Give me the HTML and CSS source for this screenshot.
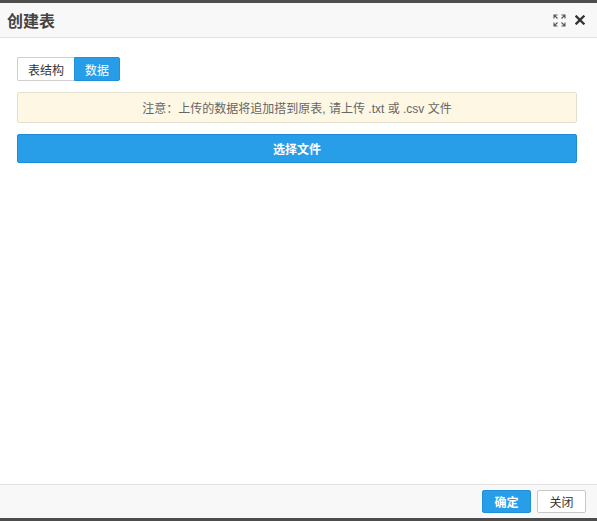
FILE: index.html
```html
<!DOCTYPE html>
<html lang="zh">
<head>
<meta charset="utf-8">
<title>创建表</title>
<link rel="stylesheet" href="styles.css">
</head>
<body>
<div class="modal">
  <div class="modal-header">
    <h3 class="modal-title">创建表</h3>
    <div class="header-tools">
      <svg class="icon-expand" width="13" height="13" viewBox="0 0 13 13" fill="none" stroke="#555" stroke-width="1.1">
        <path d="M1 4.5V1h3.5M1 1l3.5 3.5"/>
        <path d="M12 4.5V1H8.5M12 1L8.5 4.5"/>
        <path d="M1 8.5V12h3.5M1 12l3.5-3.5"/>
        <path d="M12 8.5V12H8.5M12 12L8.5 8.5"/>
      </svg>
      <svg class="icon-close" width="10" height="10" viewBox="0 0 10 10" stroke="#333" stroke-width="2.3" stroke-linecap="square">
        <path d="M1.5 1.5l7 7M8.5 1.5l-7 7"/>
      </svg>
    </div>
  </div>
  <div class="modal-body">
    <div class="tabs">
      <span class="tab">表结构</span>
      <span class="tab active">数据</span>
    </div>
    <div class="alert">注意：上传的数据将追加搭到原表, 请上传 .txt 或 .csv 文件</div>
    <button class="btn-file">选择文件</button>
  </div>
  <div class="modal-footer">
    <button class="btn btn-primary">确定</button>
    <button class="btn btn-default">关闭</button>
  </div>
</div>
</body>
</html>
```
FILE: styles.css
```css
html, body {
  margin: 0;
  padding: 0;
  height: 100%;
}
body {
  font-family: "Liberation Sans", "Noto Sans CJK SC", sans-serif;
  font-size: 12px;
  color: #333;
  background: #fff;
}
.modal {
  height: 521px;
  box-sizing: border-box;
  border-top: 3px solid #4d4d4d;
  border-bottom: 3px solid #4d4d4d;
  display: flex;
  flex-direction: column;
}
.modal-header {
  height: 34px;
  background: #f8f8f8;
  border-bottom: 1px solid #e2e2e2;
  display: flex;
  align-items: center;
  justify-content: space-between;
  padding: 0 12px 0 7px;
}
.modal-title {
  margin: 0;
  font-size: 16px;
  font-weight: bold;
  color: #444;
  font-family: "Noto Sans CJK SC", sans-serif;
  letter-spacing: 0;
}
.header-tools {
  display: flex;
  align-items: center;
  gap: 9px;
}
.icon-expand, .icon-close {
  display: block;
}
.icon-expand {
  margin-right: 0;
}
.modal-body {
  flex: 1;
  padding: 19px 20px 0 17px;
}
.tabs {
  display: flex;
  height: 24px;
}
.tab {
  display: flex;
  align-items: center;
  justify-content: center;
  box-sizing: border-box;
  height: 24px;
  width: 57px;
  border: 1px solid #cfcfcf;
  border-right: none;
  border-radius: 2px 0 0 2px;
  background: #fff;
  color: #333;
  font-family: "Noto Sans CJK SC", sans-serif;
  font-size: 12px;
}
.tab.active {
  width: 46px;
  background: #279de8;
  border: 1px solid #1e90dc;
  border-radius: 0 2px 2px 0;
  color: #fff;
}
.alert {
  margin-top: 11px;
  height: 31px;
  box-sizing: border-box;
  background: #fdf7e3;
  border: 1px solid #e3dfcf;
  border-radius: 2px;
  display: flex;
  align-items: center;
  justify-content: center;
  color: #666;
  font-size: 12px;
  font-family: "Liberation Sans", "Noto Sans CJK SC", sans-serif;
}
.btn-file {
  display: block;
  margin-top: 11px;
  width: 100%;
  height: 29px;
  background: #289ee8;
  border: 1px solid #1b8cd8;
  border-radius: 2px;
  color: #fff;
  font-weight: bold;
  font-size: 12px;
  font-family: "Noto Sans CJK SC", sans-serif;
  padding: 0;
}
.modal-footer {
  height: 33px;
  background: #f8f8f8;
  border-top: 1px solid #e2e2e2;
  display: flex;
  align-items: center;
  justify-content: flex-end;
  gap: 6px;
  padding: 0 11px 0 0;
}
.btn {
  width: 49px;
  height: 23px;
  box-sizing: border-box;
  border-radius: 2px;
  font-size: 12px;
  font-family: "Noto Sans CJK SC", sans-serif;
  padding: 0;
}
.btn-primary {
  background: #289ee8;
  border: 1px solid #1e90dc;
  color: #fff;
  font-weight: bold;
}
.btn-default {
  background: #fff;
  border: 1px solid #c8c8c8;
  color: #333;
}
```
